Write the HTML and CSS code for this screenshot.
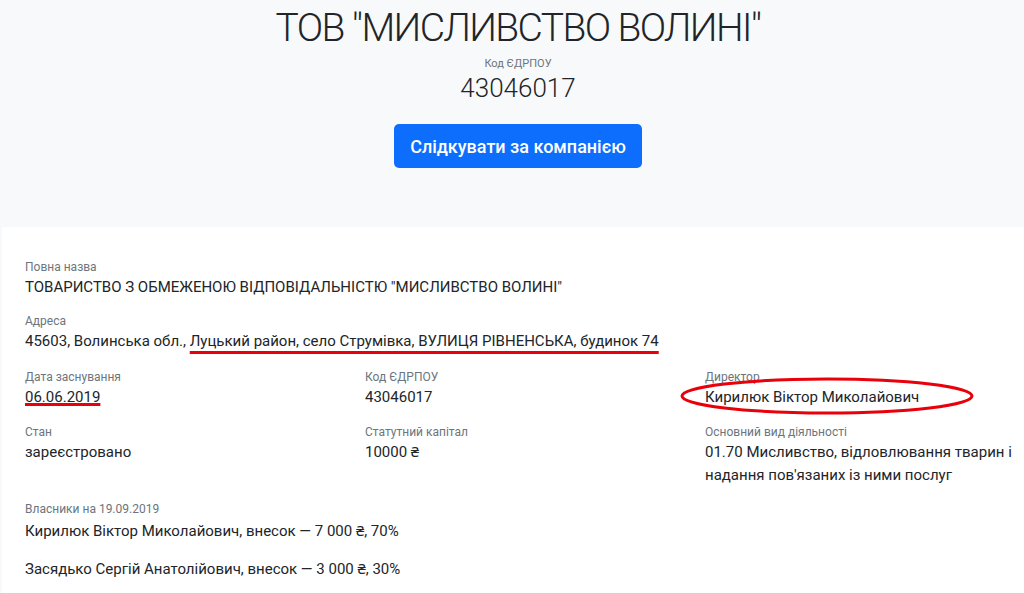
FILE: index.html
```html
<!DOCTYPE html>
<html lang="uk">
<head>
<meta charset="utf-8">
<link rel="stylesheet" href="styles.css">
</head>
<body>
<header class="hero">
  <h1 class="hero-title">ТОВ "МИСЛИВСТВО ВОЛИНІ"</h1>
  <div class="hero-label">Код ЄДРПОУ</div>
  <div class="hero-code">43046017</div>
  <button class="btn-follow" type="button">Слідкувати за компанією</button>
</header>
<main class="card">
  <div class="field">
    <div class="label">Повна назва</div>
    <div class="value">ТОВАРИСТВО З ОБМЕЖЕНОЮ ВІДПОВІДАЛЬНІСТЮ "МИСЛИВСТВО ВОЛИНІ"</div>
  </div>
  <div class="field field-wide">
    <div class="label">Адреса</div>
    <div class="value">45603, Волинська обл., <span class="red-under">Луцький район, село Струмівка, ВУЛИЦЯ РІВНЕНСЬКА, будинок 74</span></div>
  </div>
  <div class="grid">
    <div class="field">
      <div class="label">Дата заснування</div>
      <div class="value"><span class="red-base">06.06.2019</span></div>
    </div>
    <div class="field">
      <div class="label">Код ЄДРПОУ</div>
      <div class="value">43046017</div>
    </div>
    <div class="field">
      <div class="label">Директор</div>
      <div class="value"><span class="circled">Кирилюк Віктор Миколайович<svg class="ellipse" viewBox="0 0 294 38" width="294" height="38"><ellipse cx="147" cy="19" rx="145" ry="17" fill="none" stroke="#e8000b" stroke-width="3"/></svg></span></div>
    </div>
    <div class="field">
      <div class="label">Стан</div>
      <div class="value">зареєстровано</div>
    </div>
    <div class="field">
      <div class="label">Статутний капітал</div>
      <div class="value">10000 ₴</div>
    </div>
    <div class="field">
      <div class="label">Основний вид діяльності</div>
      <div class="value">01.70 Мисливство, відловлювання тварин і надання пов'язаних із ними послуг</div>
    </div>
  </div>
  <div class="field">
    <div class="label">Власники на 19.09.2019</div>
    <p class="owner">Кирилюк Віктор Миколайович, внесок — 7 000 ₴, 70%</p>
    <p class="owner">Засядько Сергій Анатолійович, внесок — 3 000 ₴, 30%</p>
  </div>
</main>
</body>
</html>
```

FILE: styles.css
```css
* { box-sizing: border-box; }
html, body { margin: 0; padding: 0; }
body {
  background: #f8f9fa;
  font-family: Roboto, "Noto Sans", "Liberation Sans", sans-serif;
  color: #212529;
}
.hero {
  height: 227px;
  padding-top: 5px;
  padding-left: 12px;
  text-align: center;
}
.hero-title {
  margin: 0;
  font-size: 39px;
  font-weight: 300;
  line-height: 46px;
  letter-spacing: -1.6px;
  color: #212529;
}
.hero-label {
  margin-top: 6px;
  font-size: 11px;
  line-height: 14px;
  color: #6c757d;
}
.hero-code {
  margin-top: 2px;
  font-size: 26px;
  font-weight: 300;
  line-height: 30px;
  color: #212529;
}
.btn-follow {
  margin-top: 21px;
  height: 44px;
  padding: 0 16px;
  border: 0;
  border-radius: 5px;
  background: #0d6efd;
  color: #fff;
  font-family: inherit;
  font-size: 18px;
  font-weight: 500;
}
.card {
  margin-left: 2px;
  background: #fff;
  padding: 32px 0 20px 23px;
  min-height: 366px;
}
.field { margin-bottom: 14px; }
.field-wide { margin-bottom: 16px; }
.label {
  font-size: 12px;
  line-height: 17px;
  color: #6c757d;
}
.value {
  font-size: 15px;
  line-height: 23px;
  color: #212529;
}
.grid {
  display: grid;
  grid-template-columns: 310px 310px 310px;
  column-gap: 30px;
  row-gap: 1px;
}
.red-under {
  text-decoration: underline;
  text-decoration-color: #e8000b;
  text-decoration-thickness: 3px;
  text-underline-offset: 5px;
}
.red-base {
  text-decoration: underline;
  text-decoration-color: #e8000b;
  text-decoration-thickness: 3px;
  text-underline-offset: 1px;
}
.circled {
  position: relative;
  display: inline-block;
}
.ellipse {
  position: absolute;
  left: -25px;
  top: -9px;
}
.owner {
  margin: 2px 0 15px;
  font-size: 15px;
  line-height: 23px;
}
```
